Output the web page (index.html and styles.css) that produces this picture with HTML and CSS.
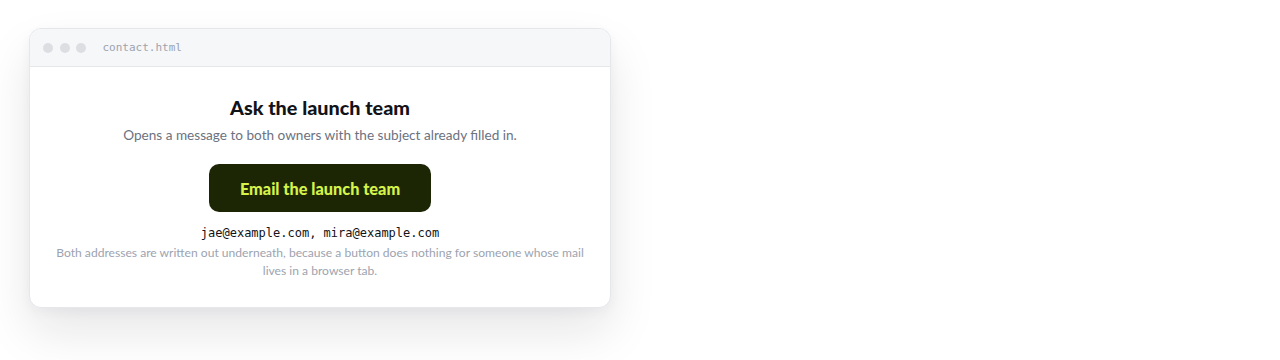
FILE: index.html
```html
<!DOCTYPE html>
<html>
<head>
<meta charset="utf-8">
<link rel="stylesheet" href="styles.css">
</head>
<body>
<div class="stage">
  <div class="window">
    <div class="titlebar">
      <span class="dot"></span><span class="dot"></span><span class="dot"></span>
      <span class="filename">contact.html</span>
    </div>
    <div class="content">
      <h1 class="title">Ask the launch team</h1>
      <p class="lead">Opens a message to both owners with the subject already filled in.</p>
      <a class="button" href="#">Email the launch team</a>
      <div class="emails">jae@example.com, mira@example.com</div>
      <p class="note">Both addresses are written out underneath, because a button does nothing for someone whose mail lives in a browser tab.</p>
    </div>
  </div>
</div>
</body>
</html>
```
FILE: styles.css
```css
* { box-sizing: border-box; }
html, body { margin: 0; padding: 0; background: #ffffff; }
body { font-family: "Lato", "Open Sans", sans-serif; }
.stage { padding: 28px 29px; min-height: 360px; }
.window {
  width: 582px;
  background: #fff;
  border: 1px solid #e5e7eb;
  border-radius: 12px;
  overflow: hidden;
  box-shadow: 0 24px 48px rgba(15, 23, 42, 0.10), 0 4px 12px rgba(15, 23, 42, 0.04);
}
.titlebar {
  height: 38px;
  background: #f6f7f9;
  border-bottom: 1px solid #e5e7eb;
  display: flex;
  align-items: center;
  padding-left: 13px;
  gap: 6.5px;
}
.dot { width: 10px; height: 10px; border-radius: 50%; background: #dcdee2; }
.filename {
  margin-left: 10px;
  font-family: "DejaVu Sans Mono", monospace;
  font-size: 11px;
  color: #9ca3af;
}
.content {
  padding: 27px 24px 27px;
  display: flex;
  flex-direction: column;
  align-items: center;
  text-align: center;
}
.title {
  margin: 0;
  font-size: 19.8px;
  font-weight: 900;
  color: #111318;
  line-height: 26px;
}
.lead {
  margin: 5px 0 0;
  font-size: 13.6px;
  color: #6b7280;
  line-height: 20px;
}
.button {
  margin-top: 19px;
  width: 222px;
  height: 48px;
  border-radius: 10px;
  background: #1d2604;
  color: #d6f34a;
  font-weight: 900;
  font-size: 16.3px;
  text-decoration: none;
  display: flex;
  align-items: center;
  justify-content: center;
}
.emails {
  margin-top: 13px;
  font-family: "DejaVu Sans Mono", monospace;
  font-size: 12px;
  color: #111318;
  line-height: 16px;
}
.note {
  margin: 3px 0 0;
  font-size: 12.1px;
  color: #9ca3af;
  line-height: 18px;
}
```
